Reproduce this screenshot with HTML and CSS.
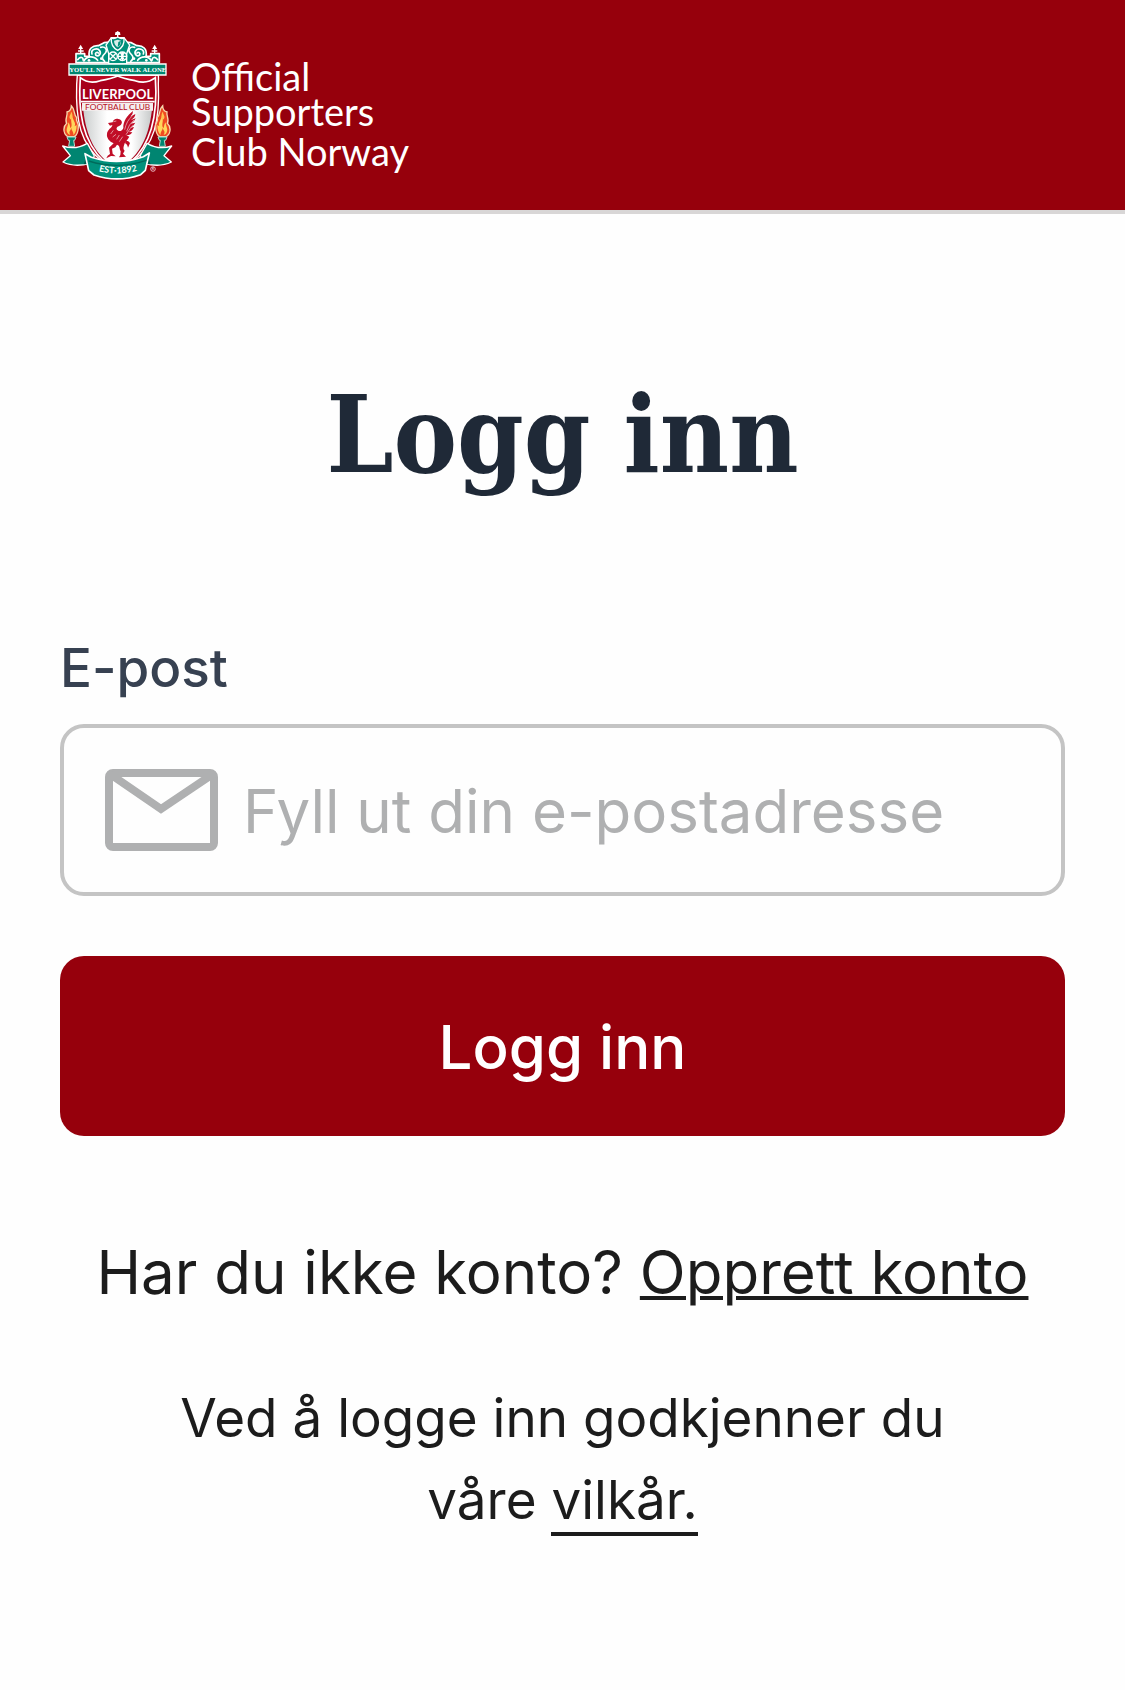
FILE: index.html
```
<!DOCTYPE html>
<html lang="no">
<head>
    <meta charset="UTF-8">
    <meta name="viewport" content="width=device-width, initial-scale=1.0">
    <title>Logg inn</title>
    <link rel="stylesheet" href="styles.css">
</head>
<body>
    <header class="header">
        <a href="#" class="logo-link" aria-label="Official Supporters Club Norway">
            <svg class="logo" viewBox="30 15 1062 480">
                <defs>
                    <linearGradient id="shieldFill" x1="0" x2="1">
                        <stop offset="0" stop-color="#c9cccc"/>
                        <stop offset="0.35" stop-color="#ffffff"/>
                        <stop offset="0.7" stop-color="#ffffff"/>
                        <stop offset="1" stop-color="#c4c7c7"/>
                    </linearGradient>
                    <path id="ribbonCurve" d="M128 448 Q202 474 280 446"/>
                    <g id="gateSide">
                        <path d="M78 128 V101 H104 V109 H118 C113 86 128 76 145 77 L162 68 L180 66 V128Z" fill="#00917c" stroke="#fff" stroke-width="5" stroke-linejoin="round"/>
                        <path d="M92 101 V84 M84 93 H101 M88 85 L92 78 L96 85Z" fill="none" stroke="#fff" stroke-width="4"/>
                        <path d="M83 119 C91 108 101 112 99 120 M102 123 C110 107 132 107 143 121 M126 102 C121 88 142 82 149 92 C155 101 145 112 137 105 C134 99 141 94 145 99 M152 82 C166 78 174 90 166 99 C159 106 151 114 164 124" fill="none" stroke="#fff" stroke-width="5" stroke-linecap="round"/>
                        <circle cx="117" cy="121" r="4" fill="#fff"/>
                        <circle cx="154" cy="116" r="4" fill="#fff"/>
                    </g>
                    <g id="torch">
                        <path d="M53 350 C36 337 41 318 50 310 C43 299 54 287 51 276 C61 273 64 264 64 257 C76 268 70 282 80 293 C76 303 87 309 85 320 C85 337 79 346 73 350Z" fill="#f04a22" stroke="#f6d6ac" stroke-width="4"/>
                        <path d="M55 342 C44 330 55 320 55 307 C60 313 59 320 62 325 C70 313 58 303 67 286 C67 301 79 307 74 319 L80 315 C80 330 76 340 70 346 C72 335 64 332 64 323 C61 334 55 333 61 345Z" fill="#ffd65c"/>
                        <path d="M61 298 C53 288 66 284 62 274 C72 286 64 289 67 298Z" fill="#ffc250"/>
                        <path d="M51 351 H78 L74 361 H71 L74 379 H56 L59 361 H55Z" fill="#00846f" stroke="#b6ded2" stroke-width="3"/>
                    </g>
                    <g id="ribbonSide">
                        <path d="M38 378 C61 386 83 387 112 370 L133 408 L120 430 C88 439 63 438 39 426 L61 407Z" fill="#008571" stroke="#fff" stroke-width="4" stroke-linejoin="round"/>
                        <path d="M99 382 L120 429 C113 431 108 433 101 433 L111 407Z" fill="#00584d"/>
                    </g>
                </defs>

                <!-- gates -->
                <use href="#gateSide"/>
                <use href="#gateSide" transform="translate(406 0) scale(-1 1)"/>
                <path d="M176 132 V101 L168 75 L184 53 H222 L239 75 L230 101 V132Z" fill="#00917c" stroke="#fff" stroke-width="4"/>
                <g fill="none" stroke="#fff" stroke-width="4">
                    <circle cx="189" cy="109" r="13"/>
                    <circle cx="217" cy="109" r="13"/>
                    <path d="M180 100 L198 118 M198 100 L180 118 M217 96 V122 M204 109 H230 M210 97 Q222 109 210 121 M224 97 Q212 109 224 121 M203 53 V34 M195 43 H211"/>
                </g>
                <path d="M184 54 Q193 58 203 51 Q213 58 222 54 C224 74 216 84 203 91 C190 84 182 73 184 54Z" fill="#008c79" stroke="#fff" stroke-width="4"/>
                <path d="M192 62 L203 59 L213 62 C213 74 209 78 203 82 C197 78 192 72 192 62Z" fill="#d7eee8"/>
                <path d="M205 66 L213 62 Q212 75 203 82Z" fill="#00917c"/>
                <path d="M197 44 Q192 34 203 35 Q214 34 209 44Z" fill="#fff"/>

                <!-- shield -->
                <path d="M82 166 H325 C326 175 325 184 325 193 C330 302 313 377 246 426 H159 C92 376 76 302 80 193Z" fill="#bd0b22" stroke="#fff" stroke-width="4"/>
                <path d="M91 173 Q116 194 151 182 Q185 176 203 168 Q221 176 255 182 Q290 194 316 173 C323 270 310 369 241 427 H165 C95 365 84 270 91 173Z" fill="#a7001a" stroke="#fff" stroke-width="5"/>
                <path d="M98 250 H308 C302 321 284 388 232 427 H174 C120 387 103 318 98 250Z" fill="url(#shieldFill)"/>
                <path d="M96 249 H309 V272 H96Z" fill="#f4eeee"/>
                <path d="M92 245 H314" stroke="#fff" stroke-width="5"/>

                <!-- liver bird -->
                <g fill="#c10d27">
                    <path d="M174 309 L188 307 C189 298 199 294 205 297 C215 298 219 308 213 314 C208 319 198 319 200 328 C205 337 217 334 220 324 C219 304 232 286 249 273 Q250 282 241 290 L256 282 Q256 292 243 300 L257 295 Q254 305 242 311 L256 308 Q251 319 240 323 L252 321 Q247 334 235 336 L247 337 Q241 347 229 346 L238 350 C233 359 227 365 224 370 C221 380 218 387 224 392 L219 401 L228 410 L207 412 L211 405 L212 394 C207 385 211 377 201 374 L196 382 L186 386 L188 401 L197 409 L183 408 L169 415 L173 407 L180 402 L177 383 L191 370 C178 365 169 353 171 342 C171 329 187 323 187 315 L180 317Z"/>
                    <path d="M227 362 Q235 361 240 369 L234 383 Q232 372 225 370Z"/>
                </g>
                <path d="M224 329 Q230 301 247 288 M230 334 Q236 313 252 300 M228 344 Q240 324 250 315 M190 331 L182 342 M198 343 L188 351 M208 345 L200 358 M218 350 L208 365 M190 305 L199 303" fill="none" stroke="#f0d5d5" stroke-width="2"/>

                <!-- torches and ribbon -->
                <use href="#ribbonSide"/>
                <use href="#ribbonSide" transform="translate(403 0) scale(-1 1)"/>
                <use href="#torch"/>
                <use href="#torch" transform="translate(402 0) scale(-1 1)"/>
                <path d="M105 401 L124 412 Q202 438 280 410 L298 399 L286 451 L272 464 Q202 489 132 465 L116 452Z" fill="#00917c" stroke="#fff" stroke-width="5" stroke-linejoin="round"/>
                <path d="M116 423 Q202 450 289 421" fill="none" stroke="#006a5b" stroke-width="4"/>
                <text class="crest-text crest-year" text-anchor="middle"><textPath href="#ribbonCurve" startOffset="50%">EST·1892</textPath></text>

                <!-- banner -->
                <path d="M57 132 H348 V165 H57Z" fill="#00866f" stroke="#fff" stroke-width="4"/>
                <text class="crest-text crest-motto" x="203" y="156" text-anchor="middle">YOU'LL NEVER WALK ALONE</text>
                <text class="crest-text crest-name" x="203" y="238" text-anchor="middle">LIVERPOOL</text>
                <text class="crest-text crest-club" x="203" y="269" text-anchor="middle">FOOTBALL CLUB</text>
                <circle cx="309" cy="447" r="7" fill="#a7001a" stroke="#fff" stroke-width="2"/>
                <text class="crest-text crest-mark" x="309" y="451" text-anchor="middle">R</text>

                <text class="logo-text" x="423" y="213">Official</text>
                <text class="logo-text" x="423" y="318">Supporters</text>
                <text class="logo-text" x="423" y="438">Club Norway</text>
            </svg>
        </a>
    </header>

    <main class="login">
        <h1 class="title">Logg inn</h1>
        <form class="login-form">
            <label class="label" for="email">E-post</label>
            <div class="input-box">
                <svg class="mail-icon" viewBox="0 0 113 82" fill="none" stroke="currentColor" stroke-width="8" stroke-linejoin="round" aria-hidden="true">
                    <rect x="4" y="4" width="105" height="74" rx="4"/>
                    <path d="M5 5 L56 40 L108 5" stroke-linejoin="miter"/>
                </svg>
                <input class="input" type="email" id="email" placeholder="Fyll ut din e-postadresse">
            </div>
            <button type="button" class="button">Logg inn</button>
        </form>
        <p class="signup">Har du ikke konto? <a href="#" class="signup-link">Opprett konto</a></p>
        <p class="terms">Ved å logge inn godkjenner du våre <a href="#" class="terms-link">vilkår.</a></p>
    </main>
</body>
</html>
```
FILE: styles.css
```
* {
    box-sizing: border-box;
}

body {
    margin: 0;
    background-color: #fefefe;
    color: #1c1c1c;
    font-family: Inter, sans-serif;
}

/* Header */
.header {
    padding: 25px 60px;
    background-color: #96000c;
    border-bottom: 4px solid #d8d6d6;
}

.logo-link {
    display: block;
}

.logo {
    display: block;
    width: 354px;
    height: 160px;
}

.logo-text {
    fill: #fff;
    font-family: Lato, sans-serif;
    font-size: 114px;
}

.crest-text {
    fill: #fff;
    font-family: Lato, sans-serif;
}

.crest-motto {
    font-family: "Liberation Serif", serif;
    font-size: 20px;
    font-weight: bold;
}

.crest-name {
    font-size: 39px;
    font-weight: bold;
}

.crest-club {
    fill: #b80e25;
    font-size: 25px;
}

.crest-year {
    font-size: 27px;
    font-weight: bold;
}

.crest-mark {
    font-size: 10px;
}

/* Login */
.login {
    padding: 148px 60px;
}

.title {
    margin: 0;
    color: #1f2937;
    font-family: "DejaVu Serif Condensed", "DejaVu Serif", serif;
    font-size: 106px;
    font-weight: bold;
    line-height: 146px;
    text-align: center;
}

.login-form {
    display: flex;
    flex-direction: column;
    margin-top: 122px;
}

.label {
    color: #374151;
    font-size: 53px;
    font-weight: 500;
    line-height: 76px;
}

.input-box {
    display: flex;
    align-items: center;
    gap: 25px;
    height: 172px;
    margin-top: 18px;
    padding: 0 41px;
    border: 4px solid #c4c4c4;
    border-radius: 24px;
}

.mail-icon {
    flex: none;
    width: 113px;
    height: 82px;
    color: #afb0b1;
}

.input {
    flex: 1;
    min-width: 0;
    padding: 2px 0 0;
    border: none;
    outline: none;
    background: none;
    color: #1c1c1c;
    font-family: inherit;
    font-size: 60px;
}

.input::placeholder {
    color: #afb0b1;
    opacity: 1;
}

.button {
    height: 180px;
    margin-top: 60px;
    padding: 2px 0 0;
    border: none;
    border-radius: 24px;
    background-color: #96000c;
    color: #fff;
    font-family: inherit;
    font-size: 60px;
    font-weight: 500;
    cursor: pointer;
}

.signup {
    margin: 91px 0 0;
    font-size: 60px;
    line-height: 90px;
    text-align: center;
}

.signup-link {
    color: inherit;
    text-decoration-thickness: 4px;
}

.terms {
    max-width: 840px;
    margin: 60px auto 0;
    font-size: 53px;
    line-height: 82px;
    text-align: center;
}

.terms-link {
    border-bottom: 4px solid #1c1c1c;
    color: inherit;
    text-decoration: none;
}
```
